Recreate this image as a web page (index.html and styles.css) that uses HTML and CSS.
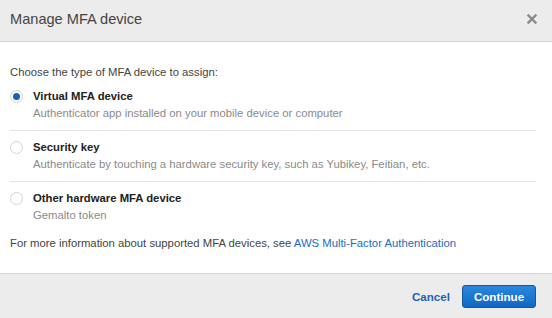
FILE: index.html
```html
<!DOCTYPE html>
<html lang="en">
<head>
  <meta charset="UTF-8" />
  <title>Manage MFA device</title>
  <link rel="stylesheet" href="styles.css">
</head>
<body>
  <div class="modal">
    <div class="modal-header">
      <div class="modal-title">Manage MFA device</div>
      <button class="close-btn" aria-label="Close">
        <svg width="10" height="10" viewBox="0 0 10 10">
          <path d="M1.5 1.5 L8.5 8.5 M8.5 1.5 L1.5 8.5" stroke="#8a8a8a" stroke-width="2.4" stroke-linecap="square"/>
        </svg>
      </button>
    </div>

    <div class="modal-body">
      <div class="intro">Choose the type of MFA device to assign:</div>

      <div class="options">
        <label class="option">
          <span class="radio checked"></span>
          <span class="option-text">
            <span class="option-label">Virtual MFA device</span>
            <span class="option-desc">Authenticator app installed on your mobile device or computer</span>
          </span>
        </label>
        <label class="option">
          <span class="radio"></span>
          <span class="option-text">
            <span class="option-label">Security key</span>
            <span class="option-desc">Authenticate by touching a hardware security key, such as Yubikey, Feitian, etc.</span>
          </span>
        </label>
        <label class="option">
          <span class="radio"></span>
          <span class="option-text">
            <span class="option-label">Other hardware MFA device</span>
            <span class="option-desc">Gemalto token</span>
          </span>
        </label>
      </div>

      <div class="more-info">For more information about supported MFA devices, see <a href="#">AWS Multi-Factor Authentication</a></div>
    </div>

    <div class="modal-footer">
      <a href="#" class="cancel">Cancel</a>
      <button class="continue">Continue</button>
    </div>
  </div>
</body>
</html>
```

FILE: styles.css
```css
body {
  margin: 0;
  background: #fff;
  font-family: "Liberation Sans", Arial, sans-serif;
  font-size: 11.3px;
  color: #444;
}

.modal {
  width: 552px;
  height: 318px;
  display: flex;
  flex-direction: column;
}

.modal-header {
  height: 41px;
  background: #ececec;
  border-bottom: 1px solid #d5d5d5;
  display: flex;
  align-items: center;
  justify-content: space-between;
  padding: 0 15px 0 10px;
}

.modal-title {
  font-size: 14.6px;
  color: #444;
  margin-top: -3px;
}

.close-btn {
  background: none;
  border: none;
  padding: 0;
  width: 10px;
  height: 10px;
  display: flex;
  margin-top: -3px;
  cursor: pointer;
}

.modal-body {
  padding: 22px 16px 22px 10px;
  flex: 1;
}

.intro {
  line-height: 16px;
}

.option {
  display: flex;
  align-items: flex-start;
  padding: 7px 0 9px;
  border-bottom: 1px solid #e2e2e2;
  cursor: pointer;
}

.option:last-child {
  border-bottom: none;
}

.radio {
  width: 11px;
  height: 11px;
  border: 1px solid #d3d3d3;
  border-radius: 50%;
  background: #fff;
  margin: 3px 10px 0 0;
  flex-shrink: 0;
  position: relative;
}

.radio.checked::after {
  content: "";
  position: absolute;
  top: 2px;
  left: 2px;
  width: 7px;
  height: 7px;
  border-radius: 50%;
  background: #1166bb;
}

.option-text {
  display: flex;
  flex-direction: column;
}

.option-label {
  font-weight: bold;
  color: #222;
  line-height: 18px;
}

.option-desc {
  color: #8a8a8a;
  line-height: 16px;
}

.more-info {
  margin-top: 3px;
  line-height: 16px;
}

.more-info a {
  color: #1a6cbf;
  text-decoration: none;
}

.modal-footer {
  height: 44px;
  background: #ececec;
  border-top: 1px solid #d5d5d5;
  display: flex;
  align-items: center;
  justify-content: flex-end;
  padding: 0 16px 0 10px;
}

.cancel {
  font-weight: bold;
  font-size: 11.6px;
  color: #1c64b4;
  text-decoration: none;
  margin-right: 12px;
}

.continue {
  width: 74px;
  height: 23px;
  border: 1px solid #0f5aa8;
  border-radius: 3px;
  background: linear-gradient(#2a88dc, #1067c4);
  color: #fff;
  font-family: "Liberation Sans", Arial, sans-serif;
  font-size: 11.6px;
  font-weight: bold;
  padding: 0;
  cursor: pointer;
}
```
